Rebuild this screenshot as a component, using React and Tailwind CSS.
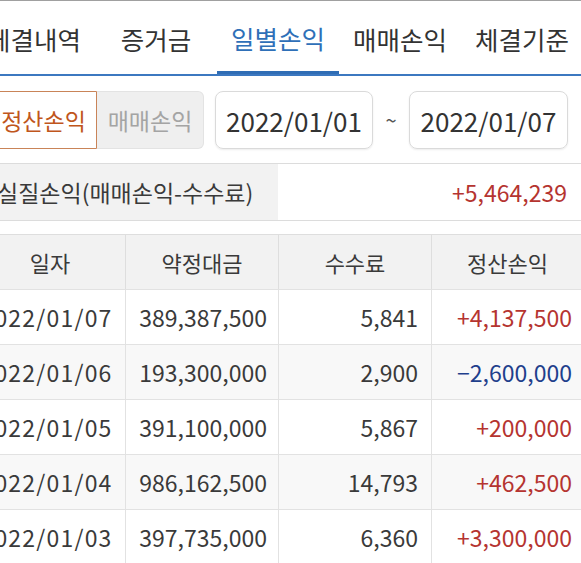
import React from "react";

const FONT = { fontFamily: '"Noto Sans CJK KR", "Noto Sans", sans-serif' };

const tabs = ["체결내역", "증거금", "일별손익", "매매손익", "체결기준"];

const rows = [
  { date: "2022/01/07", amount: "389,387,500", fee: "5,841", pnl: "+4,137,500" },
  { date: "2022/01/06", amount: "193,300,000", fee: "2,900", pnl: "−2,600,000" },
  { date: "2022/01/05", amount: "391,100,000", fee: "5,867", pnl: "+200,000" },
  { date: "2022/01/04", amount: "986,162,500", fee: "14,793", pnl: "+462,500" },
  { date: "2022/01/03", amount: "397,735,000", fee: "6,360", pnl: "+3,300,000" },
];

export default function App() {
  return (
    <div className="w-[581px] h-[563px] overflow-hidden bg-white text-[#383838]" style={FONT}>
      <div className="h-px bg-[#a0a0a0]" />

      {/* Tabs */}
      <div className="h-[75px] flex items-end border-b-2 border-[#3c78c0]">
        <div className="flex -ml-[27px] h-full">
          {tabs.map((t) => (
            <div
              key={t}
              className={
                t === "일별손익"
                  ? "w-[122px] h-full flex items-center justify-center pt-[4px] text-[25.5px] text-[#2f70b8] border-b-[3px] border-[#2f6db5]"
                  : "w-[122px] h-full flex items-center justify-center pt-[4px] text-[25.5px] text-[#333]"
              }
            >
              {t}
            </div>
          ))}
        </div>
      </div>

      {/* Filter row */}
      <div className="flex items-center h-[58px] mt-[15px] -ml-[10px]">
        <div className="w-[107px] h-full flex items-center justify-center border border-[#c98458] rounded-l-[6px] text-[23px] text-[#c0561c] bg-white">
          정산손익
        </div>
        <div className="w-[107px] h-full flex items-center justify-center border border-l-0 border-[#e3e3e3] rounded-r-[6px] text-[23px] text-[#a4a4a4] bg-[#efefef]">
          매매손익
        </div>
        <div className="ml-[11px] w-[158px] h-full flex items-center justify-center border border-[#dadada] rounded-[8px] shadow-[0_1px_2px_rgba(0,0,0,0.08)] text-[26px] text-[#333]">
          2022/01/01
        </div>
        <div className="w-[36px] text-center text-[20px] text-[#555]">~</div>
        <div className="w-[159px] h-full flex items-center justify-center border border-[#dadada] rounded-[8px] shadow-[0_1px_2px_rgba(0,0,0,0.08)] text-[26px] text-[#333]">
          2022/01/07
        </div>
      </div>

      {/* Summary */}
      <div className="mt-[14px] h-[58px] flex border-y border-[#dcdcdc]">
        <div className="w-[281px] flex items-center bg-[#f2f2f2] -ml-[3px] text-[23px] text-[#3a3a3a]">
          실질손익(매매손익-수수료)
        </div>
        <div className="flex-1 flex items-center justify-end pr-[14px] text-[23px] text-[#b53430]">
          +5,464,239
        </div>
      </div>

      {/* Table */}
      <div className="mt-[13px] -ml-[25px] w-[608px] border-t border-[#dedede]">
        <div className="grid grid-cols-[150px_153px_153px_152px] h-[54px] bg-[#f2f2f2] text-[22px] text-[#3a3a3a]">
          <div className="flex items-center justify-center">일자</div>
          <div className="flex items-center justify-center border-l border-[#dedede]">약정대금</div>
          <div className="flex items-center justify-center border-l border-[#dedede]">수수료</div>
          <div className="flex items-center justify-center border-l border-[#dedede]">정산손익</div>
        </div>
        {rows.map((r, i) => (
          <div
            key={r.date}
            className={
              "grid grid-cols-[150px_153px_153px_152px] h-[55px] border-t border-[#e2e2e2] text-[23px] text-[#3a3a3a] " +
              (i % 2 === 1 ? "bg-[#f8f8f8]" : "bg-white")
            }
          >
            <div className="flex items-center justify-center pr-[7px] tracking-[1.2px]">{r.date}</div>
            <div className="flex items-center justify-end pr-[11px] border-l border-[#e2e2e2]">{r.amount}</div>
            <div className="flex items-center justify-end pr-[13px] border-l border-[#e2e2e2]">{r.fee}</div>
            <div
              className={
                "flex items-center justify-end pr-[11px] border-l border-[#e2e2e2] " +
                (r.pnl.startsWith("+") ? "text-[#b53430]" : "text-[#1f3f8c]")
              }
            >
              {r.pnl}
            </div>
          </div>
        ))}
      </div>
    </div>
  );
}
